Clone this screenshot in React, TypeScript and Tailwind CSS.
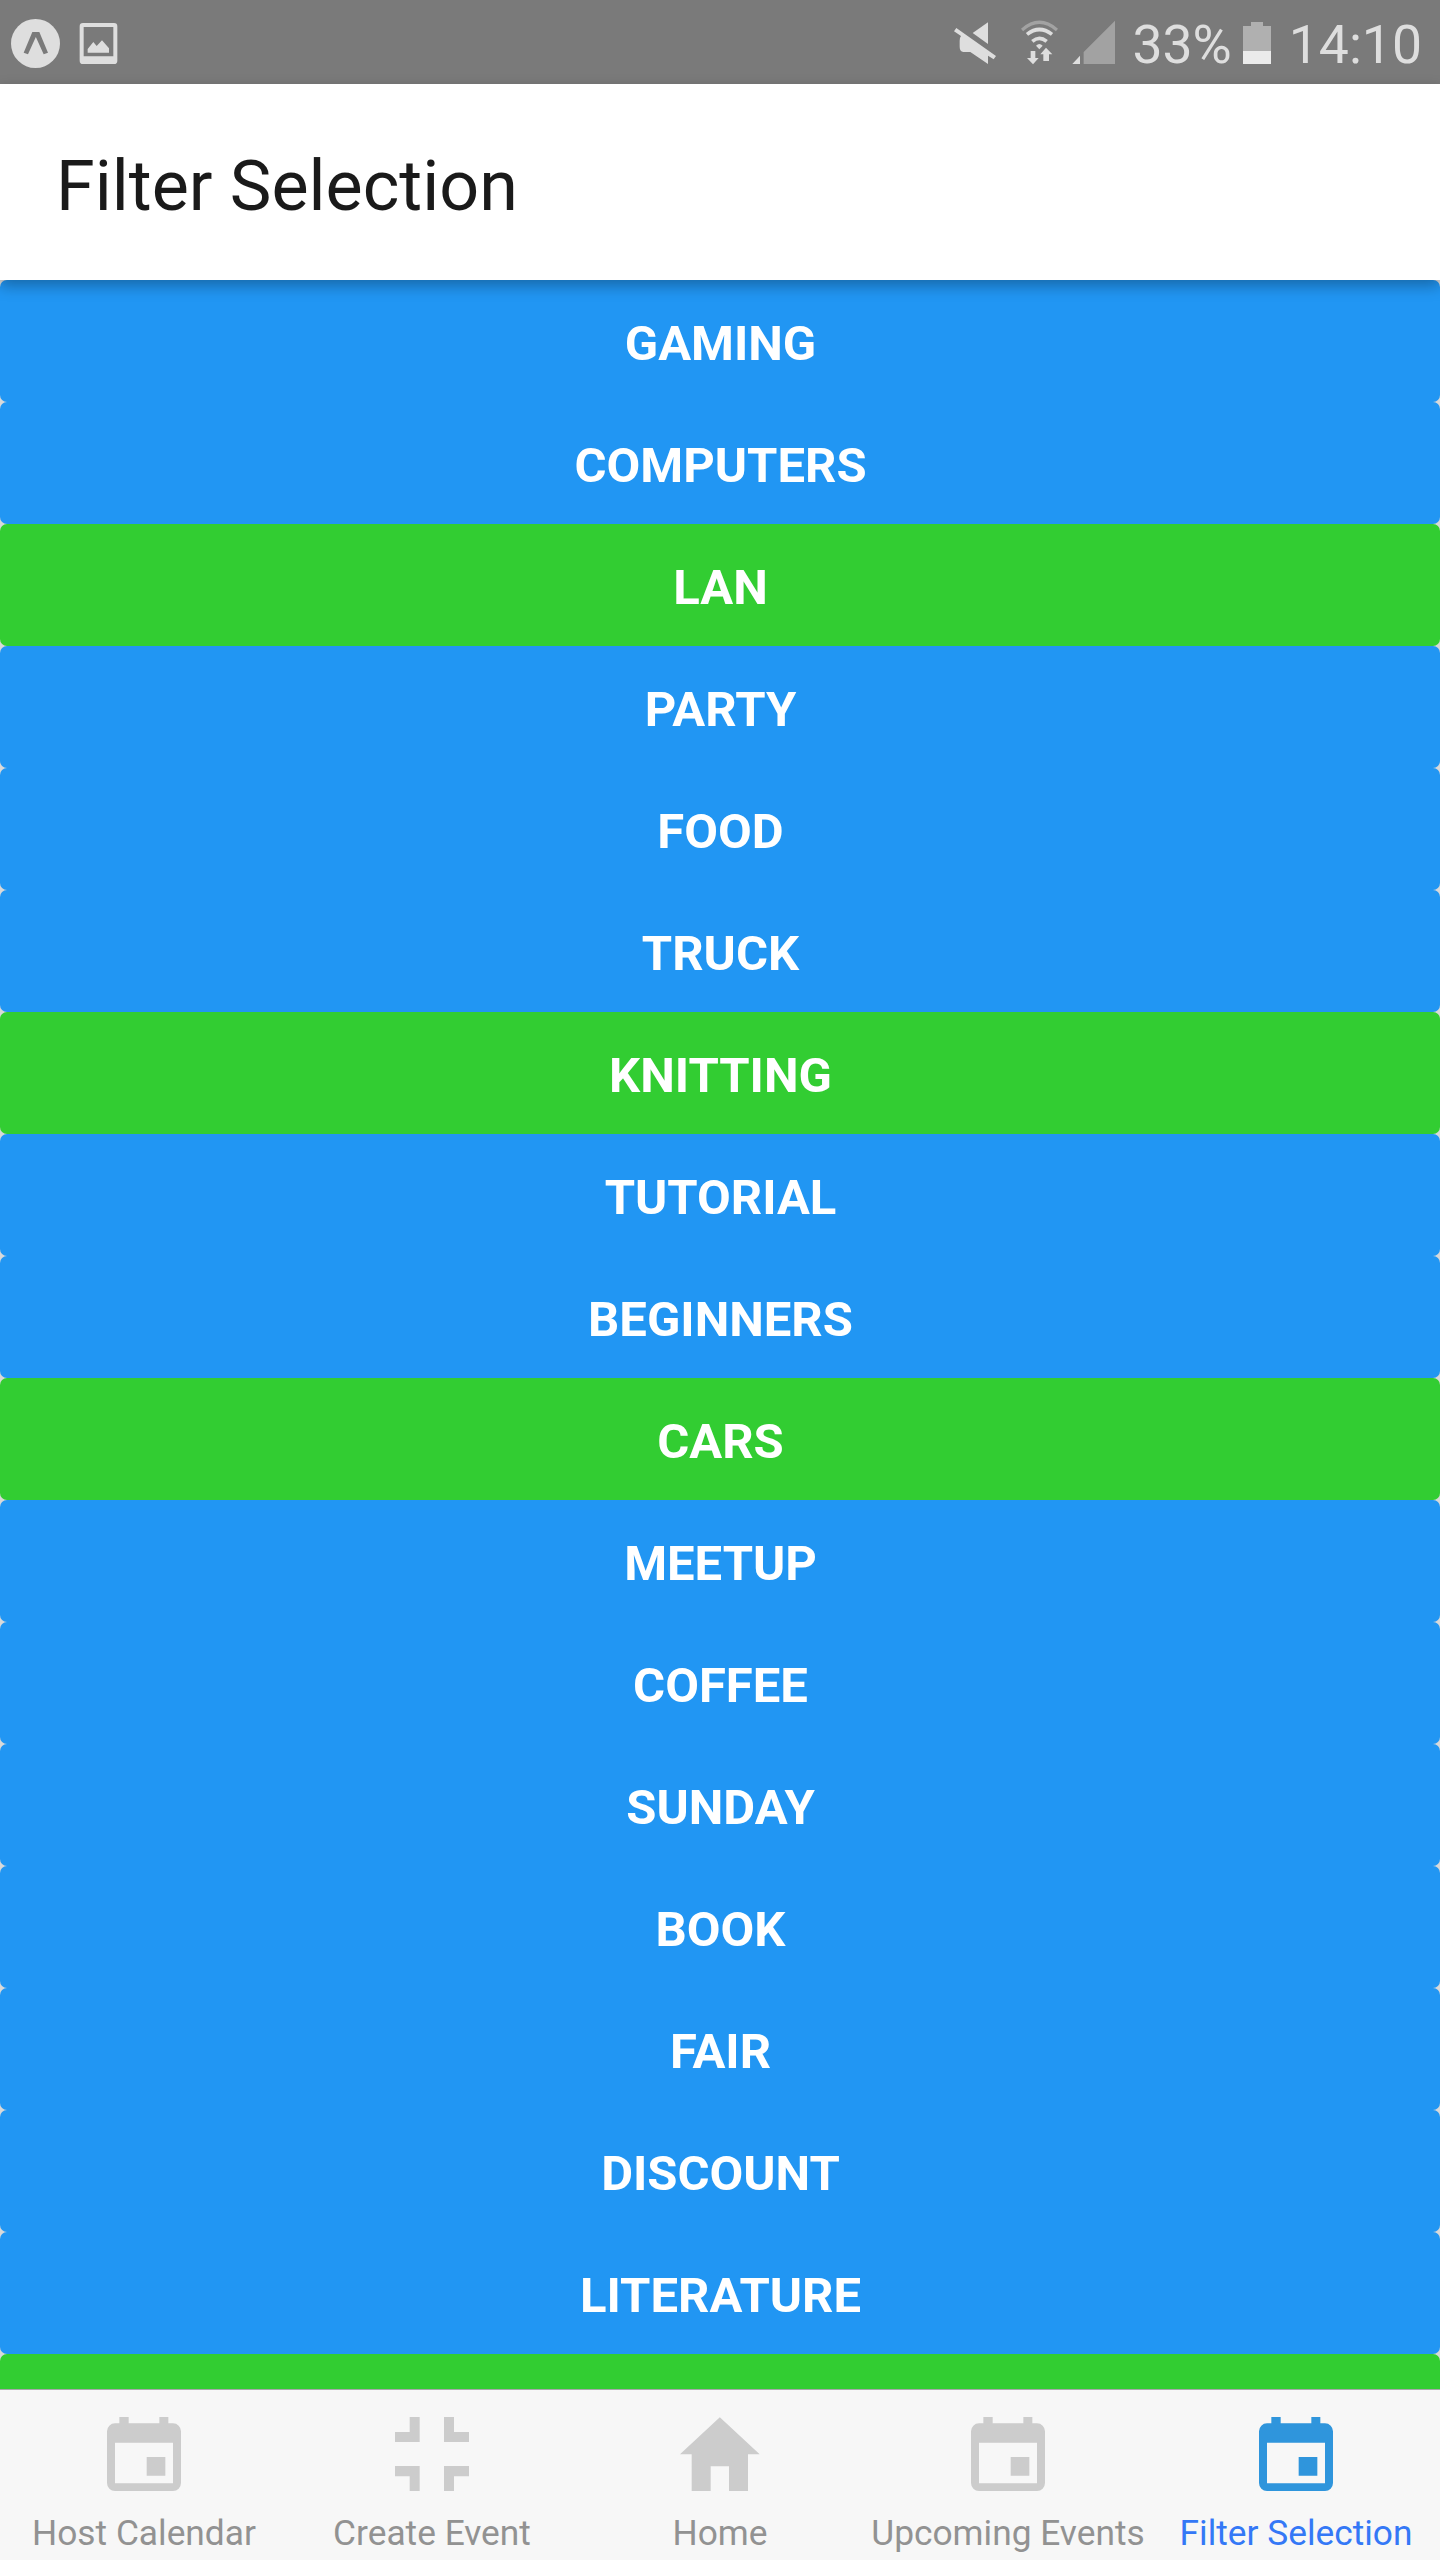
import React from "react";

const filters: { name: string; on?: boolean }[] = [
  { name: "GAMING" },
  { name: "COMPUTERS" },
  { name: "LAN", on: true },
  { name: "PARTY" },
  { name: "FOOD" },
  { name: "TRUCK" },
  { name: "KNITTING", on: true },
  { name: "TUTORIAL" },
  { name: "BEGINNERS" },
  { name: "CARS", on: true },
  { name: "MEETUP" },
  { name: "COFFEE" },
  { name: "SUNDAY" },
  { name: "BOOK" },
  { name: "FAIR" },
  { name: "DISCOUNT" },
  { name: "LITERATURE" },
];

const CALENDAR =
  "M358 231H386V250H478V231H505V250H519A24 24 0 0 1 543 274V429A24 24 0 0 1 519 453H345A24 24 0 0 1 321 429V274A24 24 0 0 1 345 250H358ZM345 308V430H519V308ZM440 351H496V407H440Z";
const CONTRACT =
  "M1229 231H1259V306H1185V276H1229ZM1332 231H1362V276H1407V306H1332ZM1185 378H1259V453H1229V409H1185ZM1332 378H1407V409H1362V453H1332Z";
const HOME = "M719.5 232L839 343H804V453H747V379H692V453H635V343H600Z";

const tabs = [
  { label: "Host Calendar", d: CALENDAR, box: "312 225 240 240" },
  { label: "Create Event", d: CONTRACT, box: "1176 225 240 240" },
  { label: "Home", d: HOME, box: "600 225 240 240" },
  { label: "Upcoming Events", d: CALENDAR, box: "312 225 240 240" },
  { label: "Filter Selection", d: CALENDAR, box: "312 225 240 240", active: true },
];

function StatusBar() {
  return (
    <div className="flex h-[84px] shrink-0 items-center bg-[#7a7a7a] text-[#dedede]">
      <svg className="ml-[11px] h-[84px] w-[49px]" viewBox="33 0 147 252" fill="#dedede">
        <circle cx="106.5" cy="130.5" r="73.5" />
        <path d="M97 96H118L144 158L131 163L107.500 111L84 163L71 158Z" fill="#7a7a7a" />
      </svg>
      <svg className="ml-[19px] h-[84px] w-[39px]" viewBox="237 0 117 252" fill="#dedede">
        <path
          fillRule="evenodd"
          d="M249 69H342Q352 69 352 79V182Q352 192 342 192H249Q239 192 239 182V79Q239 69 249 69ZM251 81V169H340V81Z"
        />
        <path d="M263 158V147L280 126L290 138L306 121L327 145V158Z" />
      </svg>
      <div className="ml-auto flex items-center">
        <svg className="h-[84px] w-[42px]" viewBox="72 0 126 252" fill="#dedede">
          <path d="M174 67V132L128 99Z" />
          <path d="M79 84L198 168L191 178L174 167V192L121 156H100Q89 154 89 140V122Q89 113 93 108L72 94Z" />
        </svg>
        <svg className="ml-[25px] h-[84px] w-[37px]" viewBox="273 0 111 252" fill="none">
          <path d="M276 90Q328 44 381 90" stroke="#a2a2a2" strokeWidth="10" />
          <path d="M291 103Q328 74 366 103" stroke="#dedede" strokeWidth="11" />
          <path d="M307 124Q328 106 350 124" stroke="#dedede" strokeWidth="11" />
          <path d="M318 137Q328 127 338 137L328 148Z" fill="#dedede" />
          <path d="M302 153H316V174H326L309 193L291 174H302Z" fill="#dedede" />
          <path d="M348 143L367 163H357V183H340V163H331Z" fill="#dedede" />
        </svg>
        <svg className="ml-[14px] h-[84px] w-[43px]" viewBox="426 0 129 252">
          <path d="M555 62V192H461V156Z" fill="#a2a2a2" />
          <path d="M450 167V192H427Z" fill="#dedede" />
        </svg>
        <span className="ml-[17px] pt-[5px] text-[53.5px] leading-none">33%</span>
        <svg className="ml-[11px] h-[84px] w-[28px]" viewBox="939 0 84 252">
          <path d="M963 66H999V78H1023V153H939V78H963Z" fill="#b0b0b0" />
          <path d="M939 153H1023V192H939Z" fill="#ebebeb" />
        </svg>
        <span className="mr-[18px] ml-[18px] pt-[5px] text-[53.5px] leading-none">14:10</span>
      </div>
    </div>
  );
}

export default function App() {
  return (
    <div className="flex h-[2560px] w-[1440px] flex-col overflow-hidden bg-[#d9d9d9] font-['Roboto',sans-serif]">
      <StatusBar />
      <header className="z-10 flex h-[196px] shrink-0 items-center bg-white px-[56px] shadow-[0_6px_14px_rgba(0,0,0,0.3)]">
        <h1 className="pt-[8px] text-[70px] leading-none text-[#1a1a1a]">Filter Selection</h1>
      </header>
      <main className="min-h-0 flex-1 overflow-hidden">
        {filters.map((f) => (
          <button
            key={f.name}
            className={`flex h-[122px] w-full items-center justify-center rounded-[7px] pt-[4px] pl-px text-[49px] leading-none font-bold text-white ${
              f.on ? "bg-[#32cd32]" : "bg-[#2196f3]"
            }`}
          >
            {f.name}
          </button>
        ))}
        <div className="h-[122px] rounded-[7px] bg-[#32cd32]" />
      </main>
      <nav className="grid h-[171px] shrink-0 grid-cols-5 border-t border-[#a7a7aa] bg-[#f7f7f7]">
        {tabs.map((t) => (
          <div
            key={t.label}
            className={`flex flex-col items-center pt-[25px] ${t.active ? "text-[#3478f6]" : "text-[#929292]"}`}
          >
            <svg
              className={`h-[80px] w-[80px] ${t.active ? "fill-[#2f95dc]" : "fill-[#cccccc]"}`}
              viewBox={t.box}
            >
              <path fillRule="evenodd" d={t.d} />
            </svg>
            <span className="mt-[18px] text-[35.3px] leading-[41px] whitespace-nowrap">{t.label}</span>
          </div>
        ))}
      </nav>
    </div>
  );
}
